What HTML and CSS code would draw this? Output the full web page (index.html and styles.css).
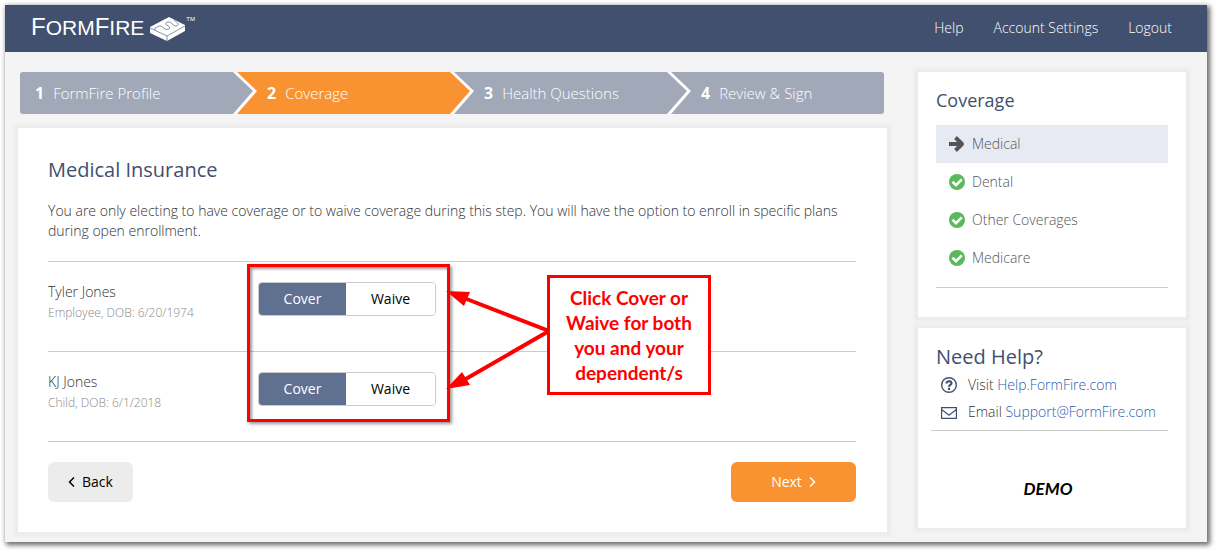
FILE: index.html
```html
<!DOCTYPE html>
<html lang="en">
<head>
    <meta charset="UTF-8">
    <meta name="viewport" content="width=device-width, initial-scale=1.0">
    <title>FormFire - Medical Insurance</title>
    <link rel="stylesheet" href="styles.css">
</head>
<body>
    <div class="app">
        <header class="topbar">
            <a href="#" class="logo">
                <span class="logo-text"><span class="logo-cap">F</span>ORM<span class="logo-cap">F</span>IRE</span>
                <svg class="logo-mark" viewBox="0 0 36 24" aria-hidden="true">
                    <path fill="#fff" d="M19 0 L35 8 V14 L17 24 L0 16 V10 Z"/>
                    <path fill="none" stroke="#7c869c" stroke-width="0.9" stroke-linejoin="round" d="M0 11 L17 19 L35 9 M17 19 V24 M5 13 V11 L9 9 Q11 8.500 12.500 10 L15 12 Q17 13 19 12 Q20.500 11 19 9.500 L16 7.500 Q15 6 17 5 Q19 4.500 20.500 5.500 L24 8.500 Q26 9.500 27.500 8.500 Q29 7.500 27.500 6 L24 3"/>
                </svg>
                <span class="logo-tm">TM</span>
            </a>
            <nav class="topnav">
                <a href="#">Help</a>
                <a href="#">Account Settings</a>
                <a href="#">Logout</a>
            </nav>
        </header>

        <div class="page">
            <main class="main">
                <ol class="steps">
                    <li class="step"><b>1</b>FormFire Profile</li>
                    <li class="step active">
                        <svg class="chevron" viewBox="0 0 24 42" aria-hidden="true">
                            <path fill="#fff" d="M0 0 H4 L24 19 L4 42 H0 Z"/>
                            <path fill="#a1a8b8" d="M0 0 L20 19 L0 42 Z"/>
                        </svg>
                        <b>2</b>Coverage
                    </li>
                    <li class="step">
                        <svg class="chevron" viewBox="0 0 24 42" aria-hidden="true">
                            <path fill="#fff" d="M0 0 H4 L24 19 L4 42 H0 Z"/>
                            <path fill="#f99331" d="M0 0 L20 19 L0 42 Z"/>
                        </svg>
                        <b>3</b>Health Questions
                    </li>
                    <li class="step">
                        <svg class="chevron" viewBox="0 0 24 42" aria-hidden="true">
                            <path fill="#fff" d="M0 0 H4 L24 19 L4 42 H0 Z"/>
                            <path fill="#a1a8b8" d="M0 0 L20 19 L0 42 Z"/>
                        </svg>
                        <b>4</b>Review &amp; Sign
                    </li>
                </ol>

                <section class="card content">
                    <h1>Medical Insurance</h1>
                    <p class="intro">You are only electing to have coverage or to waive coverage during this step. You will have the option to enroll in specific plans during open enrollment.</p>

                    <div class="members">
                        <div class="member">
                            <div class="member-info">
                                <div class="member-name">Tyler Jones</div>
                                <div class="member-detail">Employee, DOB: 6/20/1974</div>
                            </div>
                            <div class="toggle" role="group" aria-label="Tyler Jones coverage">
                                <button type="button" class="selected" aria-pressed="true">Cover</button>
                                <button type="button" aria-pressed="false">Waive</button>
                            </div>
                        </div>
                        <div class="member">
                            <div class="member-info">
                                <div class="member-name">KJ Jones</div>
                                <div class="member-detail">Child, DOB: 6/1/2018</div>
                            </div>
                            <div class="toggle" role="group" aria-label="KJ Jones coverage">
                                <button type="button" class="selected" aria-pressed="true">Cover</button>
                                <button type="button" aria-pressed="false">Waive</button>
                            </div>
                        </div>

                        <!-- tutorial overlay -->
                        <div class="highlight"></div>
                        <svg class="arrows" viewBox="0 0 104 100" aria-hidden="true">
                            <path fill="none" stroke="#f00" stroke-width="4" d="M18 8 L103 41 L18 90"/>
                            <path fill="#f00" d="M0 1 L24 2 L18 16 Z M0 99 L16 82 L24 95 Z"/>
                        </svg>
                        <div class="callout">Click Cover or Waive for both you and your dependent/s</div>
                    </div>

                    <div class="actions">
                        <button type="button" class="btn back">
                            <svg class="caret" viewBox="0 0 7 12" aria-hidden="true"><path d="M6 1.500 L1.500 6 L6 10.500"/></svg>
                            Back
                        </button>
                        <button type="button" class="btn next">
                            Next
                            <svg class="caret" viewBox="0 0 7 12" aria-hidden="true"><path d="M1 1.500 L5.500 6 L1 10.500"/></svg>
                        </button>
                    </div>
                </section>
            </main>

            <aside class="sidebar">
                <section class="card side-card">
                    <h2>Coverage</h2>
                    <ul class="coverage-list">
                        <li class="current">
                            <svg class="icon" viewBox="0 0 16 16" aria-hidden="true">
                                <path fill="none" stroke="#555" stroke-width="4" stroke-linejoin="round" d="M0 8 H13 M6.500 1.500 L13 8 L6.500 14.500"/>
                            </svg>
                            <a href="#">Medical</a>
                        </li>
                        <li>
                            <svg class="icon" viewBox="0 0 16 16" aria-hidden="true">
                                <circle cx="8" cy="8" r="8" fill="#5cb85c"/>
                                <path fill="none" stroke="#fff" stroke-width="2.600" d="M3.500 7.800 L7 11.200 L12.800 5.400"/>
                            </svg>
                            <a href="#">Dental</a>
                        </li>
                        <li>
                            <svg class="icon" viewBox="0 0 16 16" aria-hidden="true">
                                <circle cx="8" cy="8" r="8" fill="#5cb85c"/>
                                <path fill="none" stroke="#fff" stroke-width="2.600" d="M3.500 7.800 L7 11.200 L12.800 5.400"/>
                            </svg>
                            <a href="#">Other Coverages</a>
                        </li>
                        <li>
                            <svg class="icon" viewBox="0 0 16 16" aria-hidden="true">
                                <circle cx="8" cy="8" r="8" fill="#5cb85c"/>
                                <path fill="none" stroke="#fff" stroke-width="2.600" d="M3.500 7.800 L7 11.200 L12.800 5.400"/>
                            </svg>
                            <a href="#">Medicare</a>
                        </li>
                    </ul>
                </section>

                <section class="card side-card help">
                    <h2>Need Help?</h2>
                    <ul class="help-list">
                        <li>
                            <svg class="icon" viewBox="0 0 16 16" aria-hidden="true">
                                <circle cx="8" cy="8" r="7.300" fill="none" stroke="#41506e" stroke-width="1.400"/>
                                <path fill="none" stroke="#41506e" stroke-width="2.200" d="M5.500 6.500 C5.500 3.500 10.500 3.500 10.500 6.300 C10.500 8 8 7.800 8 9.800 M8 10.800 V12.900"/>
                            </svg>
                            <span>Visit <a href="#">Help.FormFire.com</a></span>
                        </li>
                        <li>
                            <svg class="icon" viewBox="0 0 16 16" aria-hidden="true">
                                <path fill="none" stroke="#41506e" stroke-width="1.200" d="M0.600 3.600 H15.400 V14.400 H0.600 Z M0.600 5.500 L8 11.200 L15.400 5.500"/>
                            </svg>
                            <span>Email <a href="#">Support@FormFire.com</a></span>
                        </li>
                    </ul>
                    <div class="demo">DEMO</div>
                </section>
            </aside>
        </div>
    </div>
</body>
</html>
```
FILE: styles.css
```css
* {
    box-sizing: border-box;
}
body {
    margin: 0;
    padding: 5px 9px 9px 5px;
    background-color: #fff;
    color: #333;
    font-family: "Open Sans", sans-serif;
    font-size: 14px;
    font-weight: 300;
    line-height: 20px;
}
a {
    color: inherit;
    text-decoration: none;
}
ul, ol {
    list-style: none;
    margin: 0;
    padding: 0;
}
h1, h2 {
    margin: 0;
    color: #41506e;
    font-size: 20px;
    font-weight: 400;
    line-height: 28px;
}
button {
    font: inherit;
    font-weight: 400;
    cursor: pointer;
}
.app {
    background-color: #f4f4f4;
    box-shadow: 2px 2px 5px 1px rgba(0, 0, 0, 0.6);
}

/* header */
.topbar {
    display: flex;
    justify-content: space-between;
    align-items: center;
    height: 47px;
    padding: 0 35px 2px 26px;
    background-color: #41506e;
    color: #fff;
}
.logo {
    display: flex;
    align-items: center;
}
.logo-text {
    font-family: "Liberation Sans", Arial, sans-serif;
    font-size: 21px;
    font-weight: 400;
    line-height: 28px;
}
.logo-cap {
    font-size: 24px;
}
.logo-mark {
    width: 36px;
    height: 24px;
    margin: 2px 0 0 6px;
}
.logo-tm {
    align-self: flex-start;
    font-family: "Liberation Sans", Arial, sans-serif;
    font-size: 6px;
    font-weight: 400;
    line-height: 12px;
}
.topnav {
    display: flex;
    gap: 30px;
    font-weight: 300;
}

/* layout */
.page {
    display: grid;
    grid-template-columns: 1fr 268px;
    align-items: start;
    gap: 31px;
    padding: 20px 21px 10px 13px;
}
.card {
    background-color: #fff;
    box-shadow: 0 0 3px 4px #ececec;
}

/* progress steps */
.steps {
    display: grid;
    grid-template-columns: 213fr 217fr 217fr 217fr;
    margin: 0 3px 14px 2px;
    border-radius: 3px;
    overflow: hidden;
}
.step {
    display: flex;
    align-items: center;
    height: 42px;
    background-color: #a1a8b8;
    color: #fff;
    font-size: 15px;
}
.step:first-child {
    padding-left: 15px;
}
.step.active {
    background-color: #f99331;
}
.step b {
    margin-right: 9px;
    font-size: 16px;
    font-weight: 700;
}
.chevron {
    width: 24px;
    height: 42px;
    margin-right: 10px;
}

/* main card */
.content {
    padding: 28px 31px 30px 30px;
}
.intro {
    margin: 17px 0 20px;
}
.members {
    position: relative;
    border-top: 1px solid #ccc;
}
.member {
    display: flex;
    height: 90px;
    padding-top: 20px;
    border-bottom: 1px solid #ccc;
}
.member-info {
    width: 210px;
}
.member-detail {
    color: #888;
    font-size: 12px;
    line-height: 22px;
}
.toggle {
    display: flex;
    height: 34px;
    border: 1px solid #ccc;
    border-radius: 4px;
    overflow: hidden;
}
.toggle button {
    width: 89px;
    padding: 0;
    border: 0;
    background-color: #fff;
    color: #000;
}
.toggle .selected {
    width: 87px;
    background-color: #607090;
    color: #fff;
}
.highlight {
    position: absolute;
    top: 2px;
    left: 199px;
    width: 203px;
    height: 158px;
    border: 3px solid #f00;
    box-shadow: 2px 2px 3px rgba(0, 0, 0, 0.4), inset 2px 2px 3px rgba(0, 0, 0, 0.4);
    pointer-events: none;
}
.arrows {
    position: absolute;
    top: 28px;
    left: 398px;
    width: 104px;
    height: 100px;
}
.callout {
    position: absolute;
    top: 13px;
    left: 499px;
    width: 164px;
    height: 120px;
    padding: 7px 12px;
    border: 3px solid #f00;
    background-color: #fff;
    color: #f00;
    font-family: Lato, sans-serif;
    font-size: 19px;
    font-weight: 700;
    line-height: 25px;
    text-align: center;
}
.actions {
    display: flex;
    justify-content: space-between;
    padding-top: 20px;
}
.btn {
    display: flex;
    justify-content: center;
    align-items: center;
    gap: 7px;
    height: 40px;
    border: 0;
    border-radius: 6px;
}
.back {
    padding: 0 20px;
    background-color: #ececec;
    color: #000;
}
.next {
    width: 125px;
    background-color: #f99331;
    color: #fff;
}
.caret {
    width: 7px;
    height: 12px;
    fill: none;
    stroke: currentColor;
    stroke-width: 1.5;
}

/* sidebar */
.sidebar {
    display: grid;
    gap: 11px;
}
.side-card {
    padding: 14px 18px 29px;
}
.side-card h2 {
    font-size: 18px;
}
.coverage-list {
    margin-top: 11px;
    padding-bottom: 10px;
    border-bottom: 1px solid #ccc;
    color: #555;
}
.coverage-list li {
    display: flex;
    align-items: center;
    gap: 7px;
    height: 38px;
    padding-left: 13px;
}
.coverage-list .current {
    background-color: #e7eaf2;
}
.icon {
    flex: none;
    width: 16px;
    height: 16px;
}
.help {
    padding-top: 15px;
}
.help h2 {
    font-size: 20px;
}
.help-list {
    margin-left: -5px;
    padding-bottom: 5px;
    border-bottom: 1px solid #ccc;
}
.help-list li {
    display: flex;
    align-items: center;
    gap: 11px;
    height: 27px;
    padding-left: 10px;
}
.help-list a {
    color: #2a5db0;
}
.demo {
    padding: 48px 8px 0 0;
    color: #000;
    font-family: Lato, sans-serif;
    font-size: 17px;
    font-style: italic;
    font-weight: 700;
    text-align: center;
}
```
